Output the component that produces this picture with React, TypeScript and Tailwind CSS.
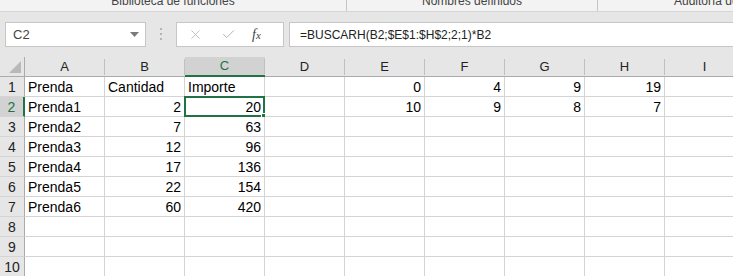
import { X, Check } from "lucide-react";

const cols = ["A", "B", "C", "D", "E", "F", "G", "H", "I"];

// row data: each row maps column letter -> [text, align]
const rows: Record<string, string>[] = [
  { A: "Prenda", B: "Cantidad", C: "Importe", E: "0", F: "4", G: "9", H: "19" },
  { A: "Prenda1", B: "2", C: "20", E: "10", F: "9", G: "8", H: "7" },
  { A: "Prenda2", B: "7", C: "63" },
  { A: "Prenda3", B: "12", C: "96" },
  { A: "Prenda4", B: "17", C: "136" },
  { A: "Prenda5", B: "22", C: "154" },
  { A: "Prenda6", B: "60", C: "420" },
  {},
  {},
  {},
];

const isNumber = (v: string) => /^-?\d+(\.\d+)?$/.test(v);

function Cell({ value, active }: { value?: string; active?: boolean }) {
  const num = value !== undefined && isNumber(value);
  return (
    <div
      className={`relative h-[20px] border-r border-b border-[#d4d4d4] bg-white px-[3px] text-[14px] leading-[20px] text-black whitespace-nowrap ${
        num ? "text-right" : "text-left"
      }`}
    >
      {value}
      {active && (
        <div className="absolute -left-[1px] -top-[1px] -right-[1px] -bottom-[1px] border-2 border-[#217346]">
          <div className="absolute -right-[4px] -bottom-[4px] h-[6px] w-[6px] border border-white bg-[#217346]" />
        </div>
      )}
    </div>
  );
}

export default function App() {
  return (
    <div
      className="h-[276px] w-[733px] overflow-hidden bg-white"
      style={{ fontFamily: '"Liberation Sans", Arial, sans-serif' }}
    >
      {/* ribbon group labels, cut at the top */}
      <div className="flex h-[12px] overflow-hidden border-b border-[#d5d5d5] bg-[#f3f3f3] text-[12px] text-[#444]">
        <div className="relative w-[347px] border-r border-[#c6c6c6] text-center">
          <span className="absolute left-0 right-0 -top-[7px] leading-[16px]">Biblioteca de funciones</span>
        </div>
        <div className="relative w-[251px] border-r border-[#c6c6c6] text-center">
          <span className="absolute left-0 right-0 -top-[7px] leading-[16px]">Nombres definidos</span>
        </div>
        <div className="relative flex-1">
          <span className="absolute left-[76px] -top-[7px] whitespace-nowrap leading-[16px]">Auditoría de fórmulas</span>
        </div>
      </div>

      {/* formula bar */}
      <div className="flex h-[45px] items-start bg-[#e6e6e6] pt-[10px] text-[#444]">
        <div className="ml-[5px] flex h-[25px] w-[141px] items-center border border-[#c6c6c6] bg-white pl-[7px] pr-[6px] text-[13px]">
          <span className="flex-1">C2</span>
          <svg width="9" height="6" viewBox="0 0 9 6">
            <path d="M0 0 L9 0 L4.5 5 Z" fill="#7a7a7a" />
          </svg>
        </div>
        <div className="flex w-[30px] flex-col items-center gap-[3px] pt-[6px]">
          <div className="h-[2px] w-[2px] bg-[#b4b4b4]" />
          <div className="h-[2px] w-[2px] bg-[#b4b4b4]" />
          <div className="h-[2px] w-[2px] bg-[#b4b4b4]" />
        </div>
        <div className="flex h-[25px] w-[108px] items-center border border-[#c6c6c6] bg-white">
          <X size={15} strokeWidth={1.3} className="ml-[11px] text-[#b4b4b4]" />
          <Check size={15} strokeWidth={1.6} className="ml-[18px] text-[#b4b4b4]" />
          <span
            className="ml-[16px] text-[14px] italic text-[#444]"
            style={{ fontFamily: '"Liberation Serif", "Times New Roman", serif' }}
          >
            f<span className="text-[11px]">x</span>
          </span>
        </div>
        <div className="ml-[5px] flex h-[25px] flex-1 items-center border border-r-0 border-[#c6c6c6] bg-white pl-[10px] text-[12px] text-[#222]">
          =BUSCARH(B2;$E$1:$H$2;2;1)*B2
        </div>
      </div>

      {/* sheet grid */}
      <div className="grid grid-cols-[25px_repeat(9,80px)]">
        {/* corner */}
        <div className="relative h-[20px] border-r border-b border-[#ababab] bg-[#e6e6e6]">
          <svg className="absolute right-[3px] bottom-[3px]" width="12" height="12" viewBox="0 0 12 12">
            <path d="M12 0 L12 12 L0 12 Z" fill="#b9b9b9" />
          </svg>
        </div>
        {cols.map((c) => (
          <div
            key={c}
            className={`flex h-[20px] items-end justify-center pb-[1px] text-[13px] leading-[17px] ${
              c === "C"
                ? "border-b-2 border-b-[#217346] bg-[#d2d2d2] text-[#217346]"
                : "border-b border-b-[#ababab] bg-[#e6e6e6] text-[#222]"
            }`}
          >
            <div className="flex h-full w-full items-end">
              <span className="flex-1 text-center">{c}</span>
              <div className="mt-[2px] h-[calc(100%-2px)] w-px self-stretch bg-[#c0c0c0]" />
            </div>
          </div>
        ))}

        {rows.map((r, i) => (
          <div key={i} className="contents">
            <div
              className={`flex h-[20px] items-center justify-center border-b border-[#d4d4d4] text-[14px] leading-[20px] ${
                i === 1
                  ? "border-r-2 border-r-[#217346] bg-[#d2d2d2] text-[#217346]"
                  : "border-r border-r-[#ababab] bg-[#e6e6e6] text-[#222]"
              }`}
            >
              {i + 1}
            </div>
            {cols.map((c) => (
              <Cell key={c} value={r[c]} active={i === 1 && c === "C"} />
            ))}
          </div>
        ))}
      </div>
    </div>
  );
}
